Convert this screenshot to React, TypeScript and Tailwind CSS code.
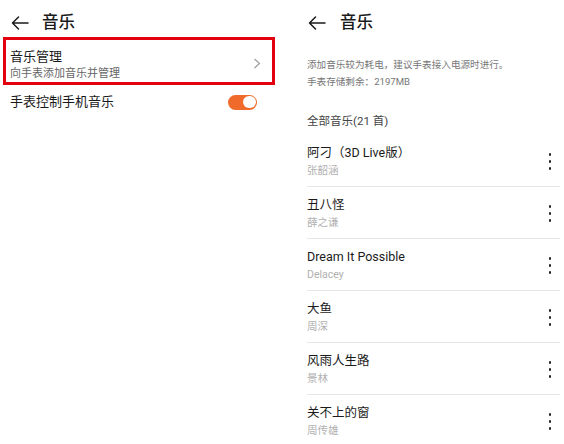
import React from "react";

const font = { fontFamily: 'Roboto, "Noto Sans CJK SC", sans-serif' };

function BackArrow() {
  return (
    <svg width="18" height="14" viewBox="0 0 18 14" fill="none">
      <path d="M17 7H1.5M7.5 1L1.5 7L7.5 13" stroke="#1a1a1a" strokeWidth="1.5" strokeLinecap="round" strokeLinejoin="round" />
    </svg>
  );
}

function Dots() {
  return (
    <div className="flex flex-col items-center gap-[4.5px]">
      <span className="block w-[2.5px] h-[2.5px] rounded-full bg-[#222]" />
      <span className="block w-[2.5px] h-[2.5px] rounded-full bg-[#222]" />
      <span className="block w-[2.5px] h-[2.5px] rounded-full bg-[#222]" />
    </div>
  );
}

const songs = [
  { t: "阿刁（3D Live版）", a: "张韶涵" },
  { t: "丑八怪", a: "薛之谦" },
  { t: "Dream It Possible", a: "Delacey" },
  { t: "大鱼", a: "周深" },
  { t: "风雨人生路", a: "景林" },
  { t: "关不上的窗", a: "周传雄" },
];

export default function App() {
  return (
    <div className="w-[564px] h-[444px] bg-white flex overflow-hidden" style={font}>
      {/* Left */}
      <div className="w-[282px] shrink-0 flex flex-col">
        <div className="h-[37px] shrink-0 pt-[14px]">
          <div className="h-[18px] flex items-center pl-[11px]">
            <BackArrow />
            <span className="ml-[13px] text-[16.5px] font-medium text-[#1a1a1a] leading-[18px]">音乐</span>
          </div>
        </div>
        <div className="ml-[3px] shrink-0 w-[272px] h-[48px] border-[3px] border-[#e3000f] pl-[4px] pr-[11px] pt-[8px] flex items-start justify-between">
          <div className="flex flex-col">
            <span className="text-[13px] leading-[18px] text-[#1a1a1a]">音乐管理</span>
            <span className="text-[11px] leading-[16px] text-[#666]">向手表添加音乐并管理</span>
          </div>
          <svg className="mt-[10px]" width="8" height="11" viewBox="0 0 8 11" fill="none">
            <path d="M1.5 1L6.5 5.5L1.5 10" stroke="#9a9a9a" strokeWidth="1.1" />
          </svg>
        </div>
        <div className="mt-[8px] shrink-0 pl-[10px] w-[257px] h-[18px] flex items-center justify-between">
          <span className="text-[13px] leading-[18px] text-[#1a1a1a]">手表控制手机音乐</span>
          <div className="w-[29px] h-[15px] rounded-full bg-[#f06a2c] flex items-center justify-end pr-[1.5px]">
            <span className="block w-[12.5px] h-[12.5px] rounded-full bg-white" />
          </div>
        </div>
      </div>
      {/* Right */}
      <div className="flex-1 flex flex-col pl-[25px] pr-[4px]">
        <div className="h-[42px] shrink-0 pt-[14px]">
          <div className="h-[18px] flex items-center pl-[1px]">
            <BackArrow />
            <span className="ml-[14px] text-[16.5px] font-medium text-[#1a1a1a] leading-[18px]">音乐</span>
          </div>
        </div>
        <div className="mt-[14px] shrink-0 flex flex-col text-[9.6px] leading-[17px] text-[#777]">
          <span>添加音乐较为耗电，建议手表接入电源时进行。</span>
          <span>手表存储剩余：2197MB</span>
        </div>
        <div className="mt-[23px] shrink-0 h-[16px] text-[11.5px] leading-[16px] text-[#444]">全部音乐(21 首)</div>
        <div className="mt-[6px] shrink-0 flex flex-col">
          {songs.map((s, i) => (
            <div key={i} className="h-[52px] shrink-0 border-b border-[#e6e6e6] pt-[9px] flex items-start justify-between">
              <div className="flex flex-col">
                <span className="text-[12.5px] leading-[18px] text-[#1a1a1a]">{s.t}</span>
                <span className="text-[10.5px] leading-[18px] text-[#b0b0b0]">{s.a}</span>
              </div>
              <div className="mt-[9px] mr-[9px]">
                <Dots />
              </div>
            </div>
          ))}
        </div>
      </div>
    </div>
  );
}
